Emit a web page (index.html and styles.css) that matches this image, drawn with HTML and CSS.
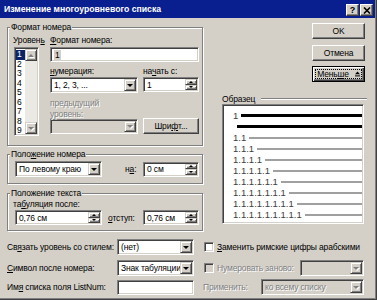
FILE: index.html
```html
<!DOCTYPE html>
<html lang="ru">
<head>
<meta charset="utf-8">
<title>Изменение многоуровневого списка</title>
<link rel="stylesheet" href="styles.css">
</head>
<body>
<div class="window">
  <div class="titlebar">
    <span class="title">Изменение многоуровневого списка</span>
    <span class="caption-btns">
      <span class="cap-btn">?</span>
      <span class="cap-btn"><svg width="8" height="7" viewBox="0 0 8 7"><path d="M1 0.5 L7 6.5 M7 0.5 L1 6.5" stroke="#000" stroke-width="1.6"/></svg></span>
    </span>
  </div>

  <div class="client">
    <div class="main">
      <div class="left">

        <fieldset class="group">
          <legend>Формат номера</legend>
          <div class="format-body">
            <div class="level-col">
              <div class="lbl">Уровен<u>ь</u></div>
              <div class="listbox sunken">
                <div class="items">
                  <div class="item sel">1</div>
                  <div class="item">2</div>
                  <div class="item">3</div>
                  <div class="item">4</div>
                  <div class="item">5</div>
                  <div class="item">6</div>
                  <div class="item">7</div>
                  <div class="item">8</div>
                  <div class="item">9</div>
                </div>
                <div class="vscroll">
                  <span class="sbtn up"></span>
                  <span class="track"></span>
                  <span class="sbtn down"></span>
                </div>
              </div>
            </div>
            <div class="fields-col">
              <div class="lbl"><u>Ф</u>ормат номера:</div>
              <div class="edit sunken"><span class="caret-sel">1</span></div>
              <div class="pair">
                <div class="col-wide">
                  <div class="lbl"><u>н</u>умерация:</div>
                  <div class="combo sunken"><span class="combo-text">1, 2, 3, ...</span><span class="drop"></span></div>
                </div>
                <div class="col-narrow">
                  <div class="lbl">на<u>ч</u>ать с:</div>
                  <div class="spin sunken"><span class="combo-text">1</span><span class="spin-btns"><span class="sb up"></span><span class="sb down"></span></span></div>
                </div>
              </div>
              <div class="pair pair-low">
                <div class="col-wide">
                  <div class="lbl two-line disabled">предыдущий<br>уровень:</div>
                  <div class="combo sunken disabled low"><span class="combo-text"></span><span class="drop"></span></div>
                </div>
                <div class="col-narrow">
                  <div class="btn">Шри<u>ф</u>т...</div>
                </div>
              </div>
            </div>
          </div>
        </fieldset>

        <fieldset class="group g-numpos">
          <legend>Поло<u>ж</u>ение номера</legend>
          <div class="numpos-body">
            <div class="combo sunken w-align"><span class="combo-text">По левому краю</span><span class="drop"></span></div>
            <div class="lbl-inline na">н<u>а</u>:</div>
            <div class="spin sunken w-small"><span class="combo-text">0 см</span><span class="spin-btns"><span class="sb up"></span><span class="sb down"></span></span></div>
          </div>
        </fieldset>

        <fieldset class="group g-textpos">
          <legend>Положение текста</legend>
          <div class="textpos-body">
            <div class="lbl tab-lbl">та<u>б</u>уляция после:</div>
            <div class="textpos-row">
              <div class="spin sunken w-align low"><span class="combo-text">0,76 см</span><span class="spin-btns"><span class="sb up"></span><span class="sb down"></span></span></div>
              <div class="lbl-inline indent"><u>о</u>тступ:</div>
              <div class="spin sunken w-small low"><span class="combo-text">0,76 см</span><span class="spin-btns"><span class="sb up"></span><span class="sb down"></span></span></div>
            </div>
          </div>
        </fieldset>

      </div>

      <div class="right">
        <div class="buttons">
          <div class="btn cmd">OK</div>
          <div class="btn cmd cancel">Отмена</div>
          <div class="btn cmd default">Мень<u>ш</u>е <svg class="less-icon" width="5" height="6" viewBox="0 0 5 6"><path d="M0 3.2 L2.5 0.6 L5 3.2Z" fill="#000"/><rect x="0" y="4.4" width="5" height="1" fill="#000"/></svg></div>
        </div>
        <div class="sample-head"><span>Образец</span><span class="etched"></span></div>
        <div class="preview sunken">
          <div class="prow lvl1"><span class="num">1</span><span class="bar"></span></div>
          <div class="prow lvl1 cont"><span class="bar"></span></div>
          <div class="prow"><span class="num">1.1</span><span class="bar"></span></div>
          <div class="prow"><span class="num">1.1.1</span><span class="bar"></span></div>
          <div class="prow"><span class="num">1.1.1.1</span><span class="bar"></span></div>
          <div class="prow"><span class="num">1.1.1.1.1</span><span class="bar"></span></div>
          <div class="prow"><span class="num">1.1.1.1.1.1</span><span class="bar"></span></div>
          <div class="prow"><span class="num">1.1.1.1.1.1.1</span><span class="bar"></span></div>
          <div class="prow"><span class="num">1.1.1.1.1.1.1.1</span><span class="bar"></span></div>
          <div class="prow"><span class="num">1.1.1.1.1.1.1.1.1</span><span class="bar"></span></div>
        </div>
      </div>
    </div>

    <div class="bottom">
      <div class="brow">
        <div class="blabel">Св<u>я</u>зать уровень со стилем:</div>
        <div class="combo sunken bctl"><span class="combo-text">(нет)</span><span class="drop"></span></div>
        <div class="bright">
          <span class="check sunken"></span>
          <span class="check-lbl"><u>З</u>аменить римские цифры арабскими</span>
        </div>
      </div>
      <div class="brow row2">
        <div class="blabel"><u>С</u>имвол после номера:</div>
        <div class="combo sunken bctl"><span class="combo-text">Знак табуляции</span><span class="drop"></span></div>
        <div class="bright">
          <span class="check sunken disabled"></span>
          <span class="check-lbl disabled">Нумеровать заново:</span>
          <div class="combo sunken disabled w-restart"><span class="combo-text"></span><span class="drop"></span></div>
        </div>
      </div>
      <div class="brow row3">
        <div class="blabel">Им<u>я</u> списка поля ListNum:</div>
        <div class="edit sunken bctl low"></div>
        <div class="bright">
          <span class="apply-lbl disabled">Применить:</span>
          <div class="combo sunken disabled w-apply"><span class="combo-text">ко всему списку</span><span class="drop"></span></div>
        </div>
      </div>
    </div>
  </div>
</div>
</body>
</html>
```

FILE: styles.css
```css
body {
    margin: 0;
    background-color: #d4d0c8;
    font-family: "Liberation Sans", Arial, sans-serif;
    font-size: 8.5px;
    letter-spacing: -0.15px;
    color: #000;
}

u {
    text-decoration-thickness: 1px;
    text-underline-offset: 1px;
}

.window {
    width: 377px;
    height: 300px;
    box-sizing: border-box;
    padding: 0 2px 2px 0;
    box-shadow: inset -1px -1px 0 #404040, inset -2px -2px 0 #808080;
    overflow: hidden;
}

/* title bar */
.titlebar {
    height: 18px;
    background-color: #0a1f8f;
    display: flex;
    align-items: center;
    justify-content: space-between;
    padding: 0 2px 0 4px;
}

.title {
    color: #fff;
    font-weight: bold;
    font-size: 8.7px;
    letter-spacing: 0;
    white-space: nowrap;
}

.caption-btns {
    display: flex;
    gap: 1px;
    margin-top: 2px;
}

.cap-btn {
    width: 13px;
    height: 12px;
    box-sizing: border-box;
    display: flex;
    align-items: center;
    justify-content: center;
    background-color: #d4d0c8;
    border: 1px solid;
    border-color: #fff #404040 #404040 #fff;
    box-shadow: inset -1px -1px 0 #808080;
    font-weight: bold;
    font-size: 9px;
    letter-spacing: 0;
    line-height: 1;
}

/* 3d bits */
.sunken {
    box-sizing: border-box;
    border: 1px solid;
    border-color: #808080 #fff #fff #808080;
    box-shadow: inset 1px 1px 0 #404040, inset -1px -1px 0 #d4d0c8;
    background-color: #fff;
}

.btn {
    box-sizing: border-box;
    height: 16px;
    display: flex;
    align-items: center;
    justify-content: center;
    background-color: #d4d0c8;
    border: 1px solid;
    border-color: #fff #404040 #404040 #fff;
    box-shadow: inset -1px -1px 0 #808080;
    white-space: nowrap;
}

.disabled {
    color: #808080;
    text-shadow: 1px 1px 0 #fff;
}

.client {
    padding: 3px 0 0 7px;
}

.main {
    display: flex;
}

.left {
    width: 196px;
}

.right {
    flex: 1;
    display: flex;
    flex-direction: column;
}

/* group boxes */
.group {
    margin: 0;
    padding: 0;
    min-width: 0;
    border: 1px solid #808080;
    box-shadow: 1px 1px 0 #fff, inset 1px 1px 0 #fff;
}

.group legend {
    margin-left: 2px;
    padding: 0 1px;
    line-height: 12px;
    background-color: #d4d0c8;
}

.lbl {
    line-height: 12px;
    white-space: nowrap;
}

.format-body {
    display: flex;
    padding-bottom: 9px;
}

.level-col {
    width: 37px;
    margin-left: 5px;
}

.level-col .lbl,
.fields-col > .lbl {
    margin-top: 1px;
}

.listbox {
    margin: 1px 0 0 1px;
    width: 25px;
    height: 89px;
    padding: 1px;
    display: flex;
}

.items {
    flex: 1;
    padding-top: 1px;
}

.item {
    height: 9.5px;
    line-height: 9.5px;
    padding-left: 1px;
}

.item.sel {
    background-color: #0a246a;
    color: #fff;
}

.vscroll {
    width: 12px;
    display: flex;
    flex-direction: column;
    background-color: #ebe9e4;
}

.track {
    flex: 1;
}

.sbtn {
    height: 12px;
    box-sizing: border-box;
    display: flex;
    align-items: center;
    justify-content: center;
    background-color: #d4d0c8;
    border: 1px solid;
    border-color: #d4d0c8 #404040 #404040 #d4d0c8;
    box-shadow: inset 1px 1px 0 #fff, inset -1px -1px 0 #808080;
}

.sbtn::after {
    content: "";
    border-left: 3px solid transparent;
    border-right: 3px solid transparent;
    filter: drop-shadow(1px 1px 0 #fff);
}

.sbtn.up::after {
    border-bottom: 3px solid #808080;
}

.sbtn.down::after {
    border-top: 3px solid #808080;
}

.fields-col {
    width: 149px;
}

.edit {
    margin-top: 1px;
    height: 15px;
    display: flex;
    align-items: center;
    padding-left: 3px;
}

.caret-sel {
    background-color: #d4d0c8;
    padding: 0 1px;
    line-height: 10px;
}

.pair {
    display: flex;
    gap: 5px;
}

.pair .lbl {
    margin-top: 3px;
}

.pair-low {
    align-items: flex-end;
}

.pair .lbl.two-line {
    margin-top: 5px;
    line-height: 10.5px;
}

.col-wide {
    width: 88px;
}

.col-narrow {
    width: 56px;
}

/* combo and spin boxes */
.combo,
.spin {
    height: 16px;
    padding: 1px;
    display: flex;
}

.spin {
    height: 15px;
}

.combo.low,
.spin.low {
    height: 15px;
}

.combo-text {
    flex: 1;
    min-width: 0;
    padding-left: 2px;
    display: flex;
    align-items: center;
    white-space: nowrap;
    overflow: hidden;
}

.combo.disabled {
    background-color: #d4d0c8;
}

.drop,
.sb {
    width: 12px;
    box-sizing: border-box;
    display: flex;
    align-items: center;
    justify-content: center;
    background-color: #d4d0c8;
    border: 1px solid;
    border-color: #d4d0c8 #404040 #404040 #d4d0c8;
    box-shadow: inset 1px 1px 0 #fff, inset -1px -1px 0 #808080;
}

.drop::after {
    content: "";
    border-left: 3px solid transparent;
    border-right: 3px solid transparent;
    border-top: 3px solid #000;
}

.disabled .drop::after {
    border-top-color: #808080;
    filter: drop-shadow(1px 1px 0 #fff);
}

.spin-btns {
    display: flex;
    flex-direction: column;
}

.sb {
    flex: 1;
}

.sb::after {
    content: "";
    border-left: 2px solid transparent;
    border-right: 2px solid transparent;
}

.sb.up::after {
    border-bottom: 2px solid #000;
}

.sb.down::after {
    border-top: 2px solid #000;
}

/* number position */
.g-numpos {
    margin-top: 2px;
}

.numpos-body {
    display: flex;
    align-items: center;
    padding: 1px 0 6px 7px;
}

.w-align {
    width: 87px;
}

.w-small {
    width: 56px;
}

.lbl-inline {
    white-space: nowrap;
}

.na {
    width: 18px;
    margin-left: 23px;
}

/* text position */
.g-textpos {
    margin-top: 3px;
}

.textpos-body {
    padding: 0 0 5px 5px;
}

.tab-lbl {
    line-height: 11px;
}

.textpos-row {
    display: flex;
    align-items: center;
    margin-left: 2px;
}

.indent {
    width: 35px;
    margin-left: 6px;
}

/* right column */
.buttons {
    display: flex;
    flex-direction: column;
    align-items: flex-end;
    padding-right: 10px;
    margin-top: 2px;
}

.cmd {
    width: 53px;
}

.cancel {
    margin-top: 6px;
}

.default {
    margin-top: 5px;
    border-color: #000;
    box-shadow: inset 1px 1px 0 #fff, inset -1px -1px 0 #404040, inset -2px -2px 0 #808080;
    outline: 1px dotted #000;
    outline-offset: -4px;
}

.less-icon {
    margin-left: 6px;
}

.sample-head {
    display: flex;
    align-items: center;
    height: 11px;
    margin-top: 11px;
    padding: 0 8px 0 19px;
}

.etched {
    flex: 1;
    margin-left: 6px;
    border-top: 1px solid #808080;
    border-bottom: 1px solid #fff;
}

.preview {
    width: 142px;
    height: 120px;
    margin-left: 19px;
    padding: 5px 1px 0 10px;
    font-size: 9.5px;
    letter-spacing: 0;
    color: #404040;
}

.prow {
    height: 11px;
    display: flex;
    align-items: center;
}

.num {
    line-height: 11px;
}

.bar {
    flex: 1;
    height: 2px;
    margin-left: 3px;
    background-color: #a0a0a0;
}

.lvl1 .bar {
    height: 3px;
    background-color: #000;
}

.cont .bar {
    margin-left: 4px;
}

/* bottom rows */
.bottom {
    margin-top: 8px;
}

.brow {
    display: flex;
    align-items: center;
    height: 16px;
}

.row2 {
    margin-top: 5px;
}

.row3 {
    margin-top: 3px;
}

.blabel {
    width: 110px;
    white-space: nowrap;
}

.bctl {
    width: 77px;
}

.edit.bctl {
    height: 15px;
    margin-top: 0;
}

.bright {
    flex: 1;
    display: flex;
    align-items: center;
    margin-left: 9px;
    padding-right: 11px;
    height: 16px;
}

.check {
    width: 10px;
    height: 10px;
    margin-left: 1px;
}

.check.disabled {
    background-color: #d4d0c8;
}

.check-lbl {
    margin-left: 3px;
    white-space: nowrap;
}

.apply-lbl {
    white-space: nowrap;
}

.w-restart {
    width: 64px;
    margin-left: auto;
}

.w-apply {
    width: 103px;
    margin-left: auto;
}
```
